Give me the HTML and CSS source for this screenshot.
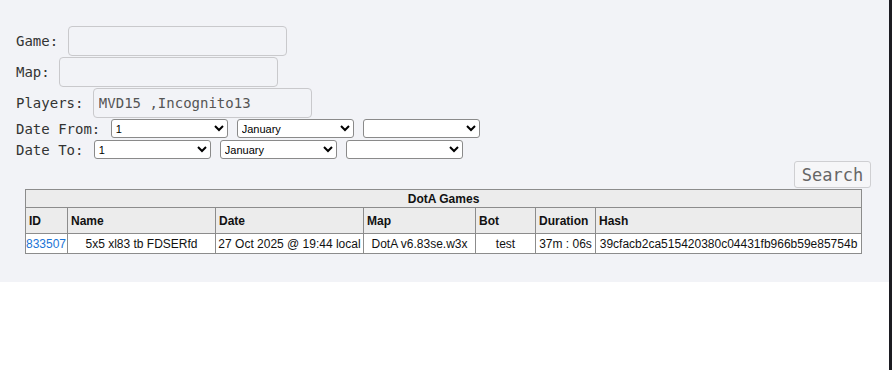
FILE: index.html
```html
<!DOCTYPE html>
<html>
<head>
<meta charset="utf-8">
<title>DotA Games</title>
<link rel="stylesheet" href="styles.css">
</head>
<body>
<div class="frame">
  <main class="main">
    <section class="panel">
      <form class="search-form">
        <div class="field">Game: <input class="text-input game" type="text"></div>
        <div class="field">Map: <input class="text-input map" type="text"></div>
        <div class="field">Players: <input class="text-input players" type="text" value="MVD15 ,Incognito13"></div>
        <div class="date-row first">Date From: <select class="sel"><option>1</option></select><select class="sel"><option>January</option></select><select class="sel"><option></option></select></div>
        <div class="date-row">Date To: <select class="sel"><option>1</option></select><select class="sel"><option>January</option></select><select class="sel"><option></option></select></div>
        <div class="actions"><button type="button" class="search-btn">Search</button></div>
      </form>
      <table class="games">
        <colgroup>
          <col style="width:42px"><col style="width:148px"><col style="width:148px"><col style="width:112px"><col style="width:60px"><col style="width:60px"><col style="width:266px">
        </colgroup>
        <thead>
          <tr><th colspan="7" class="caption-cell">DotA Games</th></tr>
          <tr class="head-row"><th>ID</th><th>Name</th><th>Date</th><th>Map</th><th>Bot</th><th>Duration</th><th>Hash</th></tr>
        </thead>
        <tbody>
          <tr class="data-row">
            <td class="id-cell"><a href="#">833507</a></td>
            <td>5x5 xl83 tb FDSERfd</td>
            <td>27 Oct 2025 @ 19:44 local</td>
            <td>DotA v6.83se.w3x</td>
            <td>test</td>
            <td>37m : 06s</td>
            <td>39cfacb2ca515420380c04431fb966b59e85754b</td>
          </tr>
        </tbody>
      </table>
    </section>
  </main>
  <div class="edge"></div>
</div>
</body>
</html>
```

FILE: styles.css
```css
html, body {
  margin: 0;
  padding: 0;
  background: #ffffff;
  height: 100%;
}
.frame {
  display: flex;
  min-height: 370px;
}
.main {
  flex: 1;
}
.edge {
  width: 3px;
  background: #1c1c22;
}
.panel {
  background: #f2f3f7;
  padding: 26px 18px 28px 16px;
  font-family: "DejaVu Sans Mono", "Liberation Mono", monospace;
  font-size: 14px;
  color: #333;
}
.search-form {
  margin: 0;
}
.field {
  height: 30px;
  margin-bottom: 1px;
  display: flex;
  align-items: center;
  white-space: pre;
}
.text-input {
  box-sizing: border-box;
  width: 219px;
  height: 30px;
  margin: 0 0 0 1px;
  padding: 0 5px;
  border: 1px solid #c9c9cc;
  border-radius: 4px;
  background: transparent;
  font-family: "DejaVu Sans Mono", "Liberation Mono", monospace;
  font-size: 14px;
  color: #555;
  outline: none;
}
.date-row {
  height: 19px;
  margin-top: 2px;
  display: flex;
  align-items: center;
  white-space: pre;
}
.date-row.first {
  margin-top: 1px;
}
.sel {
  box-sizing: border-box;
  width: 117px;
  height: 19px;
  margin: 0 0 0 9px;
  font-family: "Liberation Sans", Arial, sans-serif;
  font-size: 11px;
  color: #000;
  background: #fff;
  border: 1px solid #8a8a8a;
  border-radius: 3px;
}
.sel:first-of-type {
  margin-left: 2px;
}
.actions {
  display: flex;
  justify-content: flex-end;
  margin-top: 2px;
}
.search-btn {
  box-sizing: border-box;
  width: 77px;
  height: 27px;
  padding: 0;
  font-family: "DejaVu Sans Mono", "Liberation Mono", monospace;
  font-size: 17px;
  color: #666;
  background: #f6f6f8;
  border: 1px solid #cfcfd2;
  border-radius: 3px;
}
.games {
  margin-left: 9px;
  margin-top: 1px;
  width: 837px;
  table-layout: fixed;
  border-collapse: collapse;
  font-family: "Liberation Sans", Arial, sans-serif;
  font-size: 12px;
  color: #111;
  background: #fff;
}
.games th, .games td {
  border: 1px solid #8c8c8c;
  overflow: hidden;
  white-space: nowrap;
}
.games th {
  background: #ececec;
  font-weight: bold;
  text-align: left;
  padding: 0 3px;
}
.games th.caption-cell {
  text-align: center;
  height: 17px;
}
.head-row th {
  height: 25px;
}
.data-row td {
  height: 19px;
  padding: 0 1px;
  text-align: center;
}
.data-row td.id-cell {
  text-align: left;
  padding-left: 0;
}
.id-cell a {
  color: #1a74d6;
  text-decoration: none;
}
```
